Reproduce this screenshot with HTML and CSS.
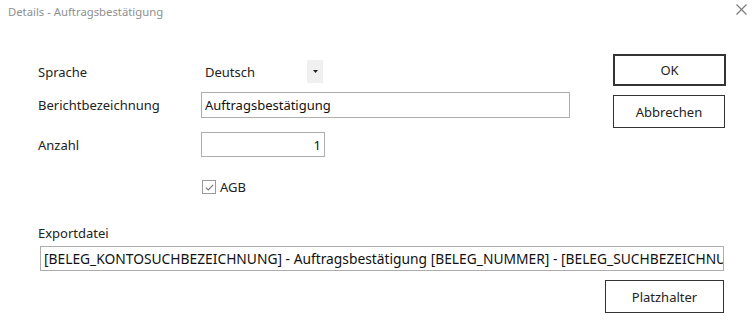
FILE: index.html
```html
<!DOCTYPE html>
<html lang="de">
<head>
<meta charset="utf-8">
<title>Details - Auftragsbestätigung</title>
<link rel="stylesheet" href="styles.css">
</head>
<body>
<div class="dialog">
  <div class="titlebar">
    <span class="title">Details - Auftragsbestätigung</span>
    <span class="close">
      <svg width="11" height="11" viewBox="0 0 11 11"><path d="M0.5 0.5 L10.5 10.5 M10.5 0.5 L0.5 10.5" stroke="#777" stroke-width="1.1" fill="none"/></svg>
    </span>
  </div>
  <div class="main">
    <div class="form">
      <div class="row row-lang">
        <span class="label">Sprache</span>
        <div class="select">
          <span class="select-value">Deutsch</span>
          <span class="select-btn"><svg width="5" height="3" viewBox="0 0 5 3"><path d="M0 0 H5 L2.5 3 Z" fill="#222"/></svg></span>
        </div>
      </div>
      <div class="row row-name">
        <span class="label">Berichtbezeichnung</span>
        <div class="input input-name">Auftragsbestätigung</div>
      </div>
      <div class="row row-count">
        <span class="label">Anzahl</span>
        <div class="input input-count">1</div>
      </div>
      <div class="row row-check">
        <span class="label"></span>
        <label class="check">
          <span class="box"><svg width="9" height="7" viewBox="0 0 9 7"><path d="M0.8 3.6 L3.3 6 L8.2 0.8" stroke="#777" stroke-width="1.1" fill="none"/></svg></span>
          <span class="check-text">AGB</span>
        </label>
      </div>
    </div>
    <div class="buttons">
      <div class="btn btn-ok">OK</div>
      <div class="btn btn-cancel">Abbrechen</div>
    </div>
  </div>
  <div class="export">
    <div class="export-label">Exportdatei</div>
    <div class="input input-export">[BELEG_KONTOSUCHBEZEICHNUNG] - Auftragsbestätigung [BELEG_NUMMER] - [BELEG_SUCHBEZEICHNUNG]</div>
    <div class="export-actions">
      <div class="btn btn-placeholder">Platzhalter</div>
    </div>
  </div>
</div>
</body>
</html>
```
FILE: styles.css
```css
* { box-sizing: border-box; }
html, body {
  margin: 0;
  padding: 0;
  background: #ffffff;
}
body {
  font-family: "Noto Sans", "Open Sans", sans-serif;
  font-size: 13px;
  color: #222;
  width: 753px;
  height: 336px;
  overflow: hidden;
}
.dialog {
  display: flex;
  flex-direction: column;
}
.titlebar {
  height: 22px;
  display: flex;
  align-items: center;
  justify-content: space-between;
  padding: 0 6px 0 8px;
}
.title {
  color: #8f8f8f;
  font-size: 11.3px;
}
.close {
  display: flex;
  margin-top: -3px;
}
.main {
  display: flex;
  padding-top: 32px;
}
.form {
  width: 570px;
  padding-top: 6px;
  padding-left: 38px;
  display: flex;
  flex-direction: column;
}
.row {
  display: grid;
  grid-template-columns: 163px auto;
  align-items: center;
  justify-items: start;
}
.row-lang { height: 23px; }
.row-name { height: 26px; margin-top: 9px; }
.row-count { height: 25px; margin-top: 14px; }
.row-check { height: 14px; margin-top: 21px; }
.select {
  display: flex;
  align-items: center;
  height: 23px;
  width: 122px;
}
.select-value {
  padding-left: 4px;
  width: 106px;
}
.select-btn {
  width: 16px;
  height: 23px;
  background: #f0f0f0;
  display: flex;
  align-items: center;
  justify-content: center;
}
.input {
  border: 1px solid #adadad;
  background: #fff;
  color: #111;
  display: flex;
  align-items: center;
  padding: 0 3px;
  white-space: nowrap;
  overflow: hidden;
}
.input-name { width: 369px; height: 26px; }
.input-count { width: 124px; height: 25px; justify-content: flex-end; }
.check {
  display: flex;
  align-items: center;
  margin-left: 1px;
}
.box {
  width: 14px;
  height: 14px;
  border: 1px solid #9a9a9a;
  display: flex;
  align-items: center;
  justify-content: center;
  background: #fff;
}
.check-text { margin-left: 4px; }
.buttons {
  display: flex;
  flex-direction: column;
  padding-left: 43px;
}
.btn {
  border: 1px solid #333;
  display: flex;
  align-items: center;
  justify-content: center;
  background: #fff;
  color: #222;
}
.btn-ok { width: 113px; height: 32px; border: 2px solid #333; }
.btn-cancel { width: 112px; height: 33px; margin-top: 9px; }
.export {
  padding-left: 38px;
  display: flex;
  flex-direction: column;
  margin-top: 32px;
}
.export-label { height: 18px; line-height: 18px; }
.input-export {
  margin-top: 4px;
  margin-left: 2px;
  width: 684px;
  height: 25px;
  font-size: 13.8px;
}
.export-actions {
  display: flex;
  width: 686px;
  justify-content: flex-end;
  margin-top: 9px;
}
.btn-placeholder { width: 119px; height: 33px; }
```
